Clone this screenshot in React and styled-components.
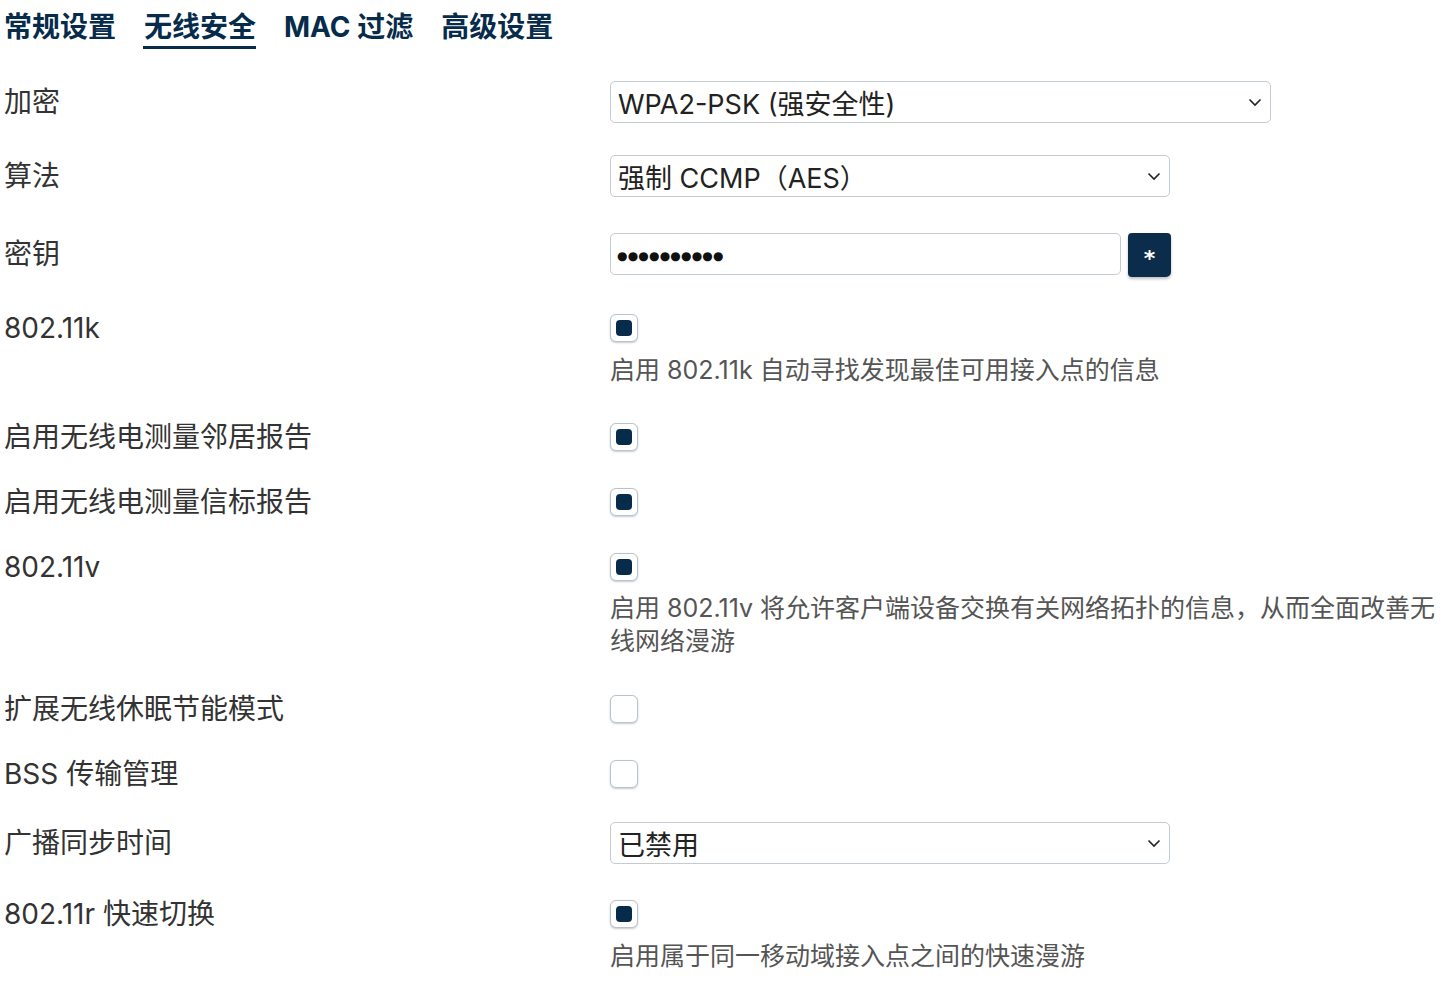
import React from 'react';
import styled, { createGlobalStyle } from 'styled-components';

const GlobalStyle = createGlobalStyle`
	html, body {
		margin: 0;
		padding: 0;
		background: #fff;
	}
	body {
		font-family: Inter, "Noto Sans CJK SC", sans-serif;
		color: #333;
	}
`;

const NAVY = '#062b4b';

const Page = styled.div`
	width: 1437px;
	padding: 0 0 0 3px;
`;

const TabBar = styled.div`
	display: flex;
	gap: 27px;
	padding-top: 8px;
`;

const Tab = styled.div`
	font-size: 28px;
	font-weight: 700;
	line-height: 38px;
	color: ${NAVY};
	padding-left: 1px;
	border-bottom: 3px solid ${(p) => (p.$active ? NAVY : 'transparent')};
`;

const Form = styled.div`
	margin-top: 32px;
`;

const Row = styled.div`
	display: grid;
	grid-template-columns: 607px 1fr;
	margin-bottom: ${(p) => p.$gap ?? 37}px;
`;

const Label = styled.div`
	grid-column: 1;
	grid-row: 1;
	align-self: center;
	font-size: 28px;
	line-height: 28px;
	color: #333;
	padding-left: 1px;
`;

const Control = styled.div`
	grid-column: 2;
	grid-row: 1;
	display: flex;
	align-items: center;
	gap: 7px;
`;

const Help = styled.div`
	grid-column: 2;
	grid-row: 2;
	margin-top: ${(p) => p.$top ?? 12}px;
	font-size: 25px;
	line-height: 33px;
	color: #555;
	padding-right: 4px;
`;

const SelectBox = styled.div`
	width: ${(p) => p.$w}px;
	height: ${(p) => p.$h ?? 42}px;
	box-sizing: border-box;
	border: 1px solid #c3cbd5;
	border-radius: 5px;
	background: #fff;
	display: flex;
	align-items: center;
`;

const SelectText = styled.span`
	flex: 1;
	padding-left: 7px;
	font-size: 27px;
	color: #222;
	white-space: nowrap;
`;

const Chevron = styled.svg`
	width: 16px;
	height: 16px;
	margin-right: 7px;
	flex: none;
`;

const PassInput = styled.div`
	width: 511px;
	height: 42px;
	box-sizing: border-box;
	border: 1px solid #c3cbd5;
	border-radius: 5px;
	display: flex;
	align-items: center;
	padding: 3px 0 0 6px;
	font-family: "DejaVu Sans", sans-serif;
	font-size: 12px;
	letter-spacing: 0.2px;
	color: #111;
`;

const StarButton = styled.button`
	width: 43px;
	height: 44px;
	border: none;
	border-radius: 4px 4px 5px 4px;
	background: #0b2c4a;
	color: #fff;
	font-size: 22px;
	font-weight: 700;
	font-family: "DejaVu Sans", sans-serif;
	display: flex;
	align-items: center;
	justify-content: center;
	padding: 6px 0 0;
	box-shadow: 0 2px 3px rgba(0, 0, 0, 0.25);
	margin-top: 2px;
`;

const Check = styled.span`
	width: 28px;
	height: 28px;
	box-sizing: border-box;
	border: 1.5px solid #b9c3cf;
	border-radius: 6px;
	background: #fff;
	box-shadow: 0 1px 2px rgba(60, 80, 110, 0.3);
	display: flex;
	align-items: center;
	justify-content: center;
`;

const CheckFill = styled.span`
	width: 16px;
	height: 16px;
	border-radius: 4px;
	background: ${NAVY};
`;

const Select = ({ value, w }) => (
	<SelectBox $w={w}>
		<SelectText>{value}</SelectText>
		<Chevron viewBox="0 0 16 16">
			<path d="M2.5 5.5 L8 11 L13.5 5.5" fill="none" stroke="#222" strokeWidth="1.6" />
		</Chevron>
	</SelectBox>
);

const Checkbox = ({ checked }) => <Check>{checked && <CheckFill />}</Check>;

export default function App() {
	return (
		<Page>
			<GlobalStyle />
			<TabBar>
				<Tab>常规设置</Tab>
				<Tab $active>无线安全</Tab>
				<Tab>MAC 过滤</Tab>
				<Tab>高级设置</Tab>
			</TabBar>
			<Form>
				<Row $gap={32}>
					<Label>加密</Label>
					<Control>
						<Select w={661} value="WPA2-PSK (强安全性)" />
					</Control>
				</Row>
				<Row $gap={34}>
					<Label>算法</Label>
					<Control>
						<Select w={560} value="强制 CCMP（AES）" />
					</Control>
				</Row>
				<Row $gap={37}>
					<Label>密钥</Label>
					<Control>
						<PassInput>●●●●●●●●●●</PassInput>
						<StarButton>*</StarButton>
					</Control>
				</Row>
				<Row $gap={36}>
					<Label>802.11k</Label>
					<Control>
						<Checkbox checked />
					</Control>
					<Help>启用 802.11k 自动寻找发现最佳可用接入点的信息</Help>
				</Row>
				<Row>
					<Label>启用无线电测量邻居报告</Label>
					<Control>
						<Checkbox checked />
					</Control>
				</Row>
				<Row>
					<Label>启用无线电测量信标报告</Label>
					<Control>
						<Checkbox checked />
					</Control>
				</Row>
				<Row>
					<Label>802.11v</Label>
					<Control>
						<Checkbox checked />
					</Control>
					<Help $top={11}>
						启用 802.11v 将允许客户端设备交换有关网络拓扑的信息，从而全面改善无线网络漫游
					</Help>
				</Row>
				<Row>
					<Label>扩展无线休眠节能模式</Label>
					<Control>
						<Checkbox />
					</Control>
				</Row>
				<Row $gap={34}>
					<Label>BSS 传输管理</Label>
					<Control>
						<Checkbox />
					</Control>
				</Row>
				<Row $gap={36}>
					<Label>广播同步时间</Label>
					<Control>
						<Select w={560} value="已禁用" />
					</Control>
				</Row>
				<Row>
					<Label>802.11r 快速切换</Label>
					<Control>
						<Checkbox checked />
					</Control>
					<Help>启用属于同一移动域接入点之间的快速漫游</Help>
				</Row>
			</Form>
		</Page>
	);
}
